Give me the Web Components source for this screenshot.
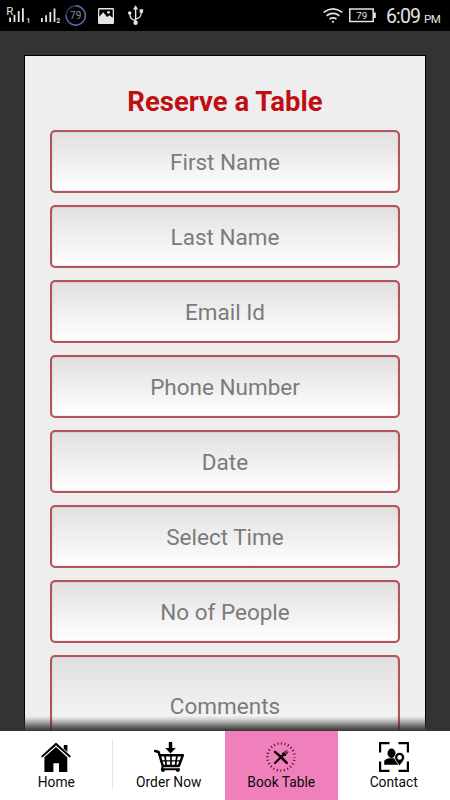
<!DOCTYPE html>
<html lang="en">

<head>
  <meta charset="UTF-8">
  <meta name="viewport" content="width=device-width, initial-scale=1.0">
  <title>Reserve a Table</title>
  <style>
    html,
    body {
      margin: 0;
      height: 100%;
      overflow: hidden;
      font-family: Roboto, "Liberation Sans", sans-serif
    }
  </style>
</head>

<body>
  <script>
    // base: every element renders its own html once into an open shadowRoot
    class BaseElement extends HTMLElement {
      constructor() {
        super().attachShadow({ mode: "open" })
      }
      connectedCallback() {
        this.shadowRoot.innerHTML = this.render();
      }
    }

    const ICONS = {
      home: `<path d="M0 14.2L15 .6 30 14.2 28.6 15.6 15 3.6 1.4 15.6Z"/><path d="M22.8 3h3.6v7l-3.6-3.2z"/>` +
        `<path d="M3.4 15.2L15 5l11.3 10.2V30H18v-8.8h-5.6V30h-9z"/>`,
      cart: `<path d="M14.8 0h3.4v6h3.6l-5.3 5.6L11.2 6h3.6z"/>` +
        `<g fill="none" stroke="#000" stroke-linejoin="round" stroke-linecap="round">` +
        `<path stroke-width="2.5" d="M1.2 9l3.4 1L8.8 24h15.4M5.4 13.2H28.8L25 23.6"/>` +
        `<path stroke-width="1.7" d="M11 13.5l1.2 10M17 13.5v10M23 13.5l-1.5 10"/><path stroke-width="1.2" d="M7 18.8h19.5"/>` +
        `<path stroke-width="2" d="M8.8 24.2l-.9 3.1H25"/></g><circle cx="9" cy="28.2" r="1.8"/><circle cx="23.8" cy="28.2" r="1.8"/>`,
      dine: `<circle cx="15" cy="15" r="13.6" fill="none" stroke="#3b1429" stroke-width="2.5" stroke-dasharray="1 2.561" stroke-dashoffset=".5"/>` +
        `<g fill="none" stroke="#100" stroke-linecap="round"><path stroke-width="2.2" d="M9 21L17.8 12.4"/><path stroke-width="2.6" d="M15 15l5.7 5.8"/>` +
        `<path stroke-width="2.4" d="M9 9.8l6 5.2"/><path stroke-width="2" d="M17.2 11.4l1.8 1.7"/>` +
        `<path stroke-width="1" d="M17.2 11.4l2.9-2.9M18.2 12.2l3-2.7M19 13.1l3-2.6"/></g>`,
      contact: `<path fill="none" stroke="#000" stroke-width="2.2" d="M1.1 10.5V1.1H10.5M19.5 1.1h9.4V10.5M28.9 19.5v9.4H19.5M10.5 28.9H1.1V19.5"/>` +
        `<ellipse cx="12.5" cy="11.3" rx="4" ry="4.7"/><path d="M5.2 22.8v-3.3c0-1.7 2.2-2.4 4.7-3.2h5.3l5.5 6.5z"/>` +
        `<path stroke="#fff" stroke-width=".8" d="M20.6 24c-1.6-2.8-5-5.6-5-8.6a5 5 0 0 1 10 0c0 3-3.4 5.8-5 8.6z"/><circle cx="20.6" cy="15.4" r="2.3" fill="#fff"/>`
    };

    customElements.define("status-bar", class extends BaseElement {
      render() {
        return `<style>` +
          `  :host{display:flex;flex:none;height:31px;background:#000;color:#e4e4e4;padding:0 10px 0 6px;box-sizing:border-box}` +
          `  svg{display:block;flex:none;fill:#e4e4e4}` +
          `  .clock{margin-left:9px;font-size:19.5px;letter-spacing:-.9px;line-height:33px;white-space:nowrap;width:54px}` +
          `  small{font-size:11.5px;letter-spacing:-.4px;margin-left:4px}` +
          `  .gap{flex:1}` +
          `</style>` +
          // signal, data ring, picture, usb
          `<svg width="140" height="31" viewBox="6 0 140 31">` +
          `<text x="6.3" y="15" font-size="11.5">R</text><path d="M9.2 17.5h1.8V22H9.2zM13.6 15h1.8v7h-1.8zM17.8 11h1.8v11h-1.8zM22 8.3h1.8V22H22z"/>` +
          `<text x="26.5" y="23" font-size="6.5" font-weight="bold">1</text>` +
          `<path d="M41 18h1.8v4H41zM45.2 15.3H47V22h-1.8zM49.4 12h1.8v10h-1.8zM53.6 8.5h1.8V22h-1.8z"/>` +
          `<text x="56.5" y="23" font-size="6.5" font-weight="bold">2</text>` +
          `<circle cx="75.7" cy="15.5" r="9.7" fill="none" stroke="#2c3b5c" stroke-width="1.4"/>` +
          `<path fill="none" stroke="#4d6daf" stroke-width="1.4" d="M75.7 5.8A9.7 9.7 0 1 1 66 15.5"/>` +
          `<text x="75.7" y="19.2" font-size="10" text-anchor="middle" fill="#87939d">79</text>` +
          `<rect x="98" y="8" width="16" height="16" rx="1.3"/><path fill="#000" d="M99.3 9.5h13.4v8.3l-3.2-2.6-2.4 1.9-3.9-4.8-3.9 4.5z"/><circle cx="108.5" cy="12.3" r="1.4"/>` +
          `<path fill="none" stroke="#e4e4e4" stroke-width="1.4" d="M135.6 8v15M135.6 20.5c-5-1-5.5-3-5.8-7M135.6 19c4.7-1 5.7-3 5.7-7"/>` +
          `<path d="M135.6 5.2l2.6 4.2H133z"/><circle cx="129.7" cy="13" r="1.8"/><path d="M139.6 9.2h3.5v3.5h-3.5z"/><circle cx="135.6" cy="22.8" r="2.2"/></svg>` +
          `<span class="gap"></span>` +
          // wifi and battery
          `<svg width="55" height="31" viewBox="322 0 55 31"><g fill="none" stroke="#e4e4e4" stroke-width="1.7">` +
          `<path d="M323.6 12.4q9.4-7 18.8 0M326.6 15.7q6.4-4.6 12.8 0M329.5 19q3.5-2.4 7 0"/><path stroke-width="1.5" d="M349.8 9h23.4v12.4h-23.4z"/></g>` +
          `<circle cx="333" cy="21.8" r="1.1"/><path d="M373.8 12.5h2v5.5h-2z"/><text x="361.8" y="18.8" font-size="9.8" text-anchor="middle">79</text></svg>` +
          `<span class="clock">6:09<small>PM</small></span>`;
      }
    });

    customElements.define("form-card", class extends BaseElement {
      render() {
        return `<style>` +
          `  :host{display:block;margin:24px 24px 0;border:1px solid #000;background:#eee;padding:27px 25px 0;height:900px;box-sizing:border-box}` +
          `  h1{margin:0 0 9px;font-size:27.5px;line-height:38px;font-weight:bold;text-align:center;color:#c00f12;white-space:nowrap}` +
          `  .fields{display:flex;flex-direction:column;gap:12px}` +
          `</style>` +
          `<h1>${this.getAttribute("heading")}</h1>` +
          `<div class="fields"><slot></slot></div>`;
      }
    });

    customElements.define("form-field", class extends BaseElement {
      render() {
        return `<style>` +
          `  :host{display:flex;align-items:center;justify-content:center;flex:none;height:63px;box-sizing:border-box;` +
          `    border:2px solid #b2555a;border-radius:5px;background:linear-gradient(#e0e0e0,#fff);box-shadow:inset 0 0 1px #b2555a;` +
          `    color:#7b7b7b;font-size:22.5px}` +
          `  :host([multiline]){height:102px}` +
          `</style>` +
          `<slot></slot>`;
      }
    });

    customElements.define("nav-item", class extends BaseElement {
      render() {
        return `<style>` +
          `  :host{display:flex;flex-direction:column;align-items:center;flex:1;padding-top:11px;color:#0a0a0a;` +
          `    font-size:13.8px;line-height:16px;white-space:nowrap;box-sizing:border-box}` +
          `  :host([divider]){background:linear-gradient(#e8e8e8,#e8e8e8) right 8px/1px 51px no-repeat}` +
          `  :host([active]){background:#f080bb}` +
          `  svg{display:block;margin-bottom:2px}` +
          `</style>` +
          `<svg width="30" height="30" viewBox="0 0 30 30">${ICONS[this.getAttribute("icon")]}</svg>` +
          `<slot></slot>`;
      }
    });

    customElements.define("nav-bar", class extends BaseElement {
      render() {
        return `<style>` +
          `  :host{display:flex;flex:none;height:69px;background:#fff;position:relative}` +
          // shadow lies over the scrolled form
          `  :host::before{content:"";position:absolute;left:0;right:0;top:-15px;height:15px;` +
          `    background:linear-gradient(#3330,#3333 25%,#333a 65%,#333 100%)}` +
          `</style>` +
          `<slot></slot>`;
      }
    });

    customElements.define("app-screen", class extends BaseElement {
      render() {
        return `<style>` +
          `  :host{display:flex;flex-direction:column;height:100vh;background:#333;overflow:hidden}` +
          `  main{flex:1;min-height:0;overflow:hidden}` +
          `</style>` +
          `<slot name="top"></slot><main><slot></slot></main><slot name="bottom"></slot>`;
      }
    });
  </script>

  <app-screen>
    <status-bar slot="top"></status-bar>
    <form-card heading="Reserve a Table">
      <form-field>First Name</form-field>
      <form-field>Last Name</form-field>
      <form-field>Email Id</form-field>
      <form-field>Phone Number</form-field>
      <form-field>Date</form-field>
      <form-field>Select Time</form-field>
      <form-field>No of People</form-field>
      <form-field multiline>Comments</form-field>
    </form-card>
    <nav-bar slot="bottom">
      <nav-item icon="home" divider>Home</nav-item>
      <nav-item icon="cart">Order Now</nav-item>
      <nav-item icon="dine" active>Book Table</nav-item>
      <nav-item icon="contact">Contact</nav-item>
    </nav-bar>
  </app-screen>

</body>

</html>
